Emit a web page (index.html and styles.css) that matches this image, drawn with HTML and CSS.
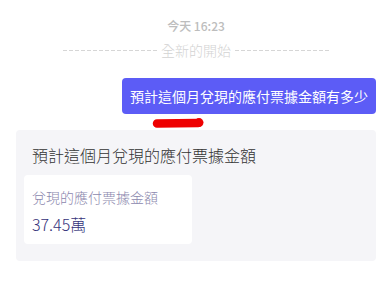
FILE: index.html
```html
<!DOCTYPE html>
<html lang="zh-Hant">
<head>
<meta charset="utf-8">
<link rel="stylesheet" href="styles.css">
</head>
<body>
<div class="page">
  <div class="time">今天 16:23</div>
  <div class="divider"><span class="dash"></span><span class="divider-text">全新的開始</span><span class="dash"></span></div>
  <div class="bubble-row"><div class="bubble">預計這個月兌現的應付票據金額有多少</div></div>
  <div class="mark-row">
    <svg class="mark" width="52" height="10" viewBox="0 0 52 10"><path d="M5 5.5 L46 5" stroke="#ee0000" stroke-width="8.5" stroke-linecap="round" fill="none"/><circle cx="47" cy="4.6" r="4.5" fill="#ee0000"/></svg>
  </div>
  <div class="card">
    <div class="card-title">預計這個月兌現的應付票據金額</div>
    <div class="stat">
      <div class="stat-label">兌現的應付票據金額</div>
      <div class="stat-value">37.45萬</div>
    </div>
  </div>
</div>
</body>
</html>
```
FILE: styles.css
```css
html, body {
  margin: 0;
  padding: 0;
  background: #ffffff;
}
body {
  font-family: "Noto Sans CJK TC", "Noto Sans", sans-serif;
}
.page {
  padding: 18px 9px 0 16px;
}
.time {
  text-align: center;
  font-size: 12px;
  line-height: 16px;
  color: #bdbdbd;
  font-weight: 500;
}
.divider {
  margin-top: 8px;
  height: 16px;
  display: flex;
  align-items: center;
  justify-content: center;
  gap: 4px;
}
.dash {
  width: 94px;
  height: 1px;
  background: repeating-linear-gradient(to right, #d6d6d6 0 4px, transparent 4px 6px);
}
.divider-text {
  font-size: 14px;
  line-height: 16px;
  color: #d3d3d3;
  font-weight: 300;
}
.bubble-row {
  margin-top: 20px;
  display: flex;
  justify-content: flex-end;
}
.bubble {
  background: #5c5cf6;
  color: #ffffff;
  font-size: 14px;
  line-height: 36px;
  height: 36px;
  padding: 0 8px 0 8px;
  border-radius: 4px;
  white-space: nowrap;
}
.mark-row {
  margin-top: 4px;
  padding-left: 136px;
  height: 10px;
}
.mark {
  display: block;
}
.card {
  margin-top: 2px;
  background: #f5f5f8;
  border-radius: 4px;
  padding: 13px 8px 17px 8px;
}
.card-title {
  font-size: 16px;
  line-height: 24px;
  color: #333333;
  font-weight: 300;
  margin: 0 8px 8px 8px;
}
.stat {
  width: 168px;
  box-sizing: border-box;
  background: #ffffff;
  border-radius: 4px;
  padding: 12px 8px 9px 8px;
}
.stat-label {
  font-size: 14px;
  line-height: 20px;
  color: #8c88ae;
  font-weight: 300;
}
.stat-value {
  margin-top: 6px;
  font-size: 16px;
  line-height: 22px;
  color: #34327a;
  font-weight: 300;
}
```
